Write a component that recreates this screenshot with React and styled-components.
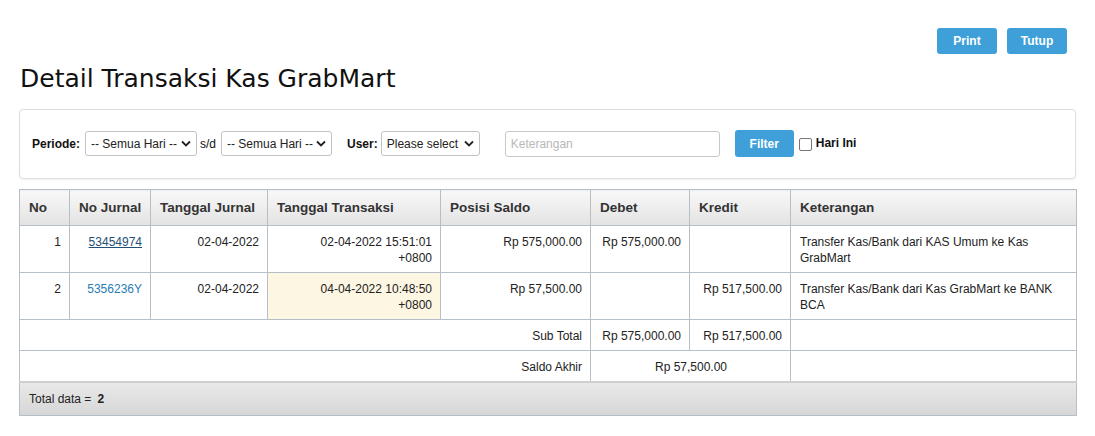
import React from 'react'
import styled, { createGlobalStyle } from 'styled-components'

const GlobalStyle = createGlobalStyle`
    body {
        margin: 0;
        background: #fff;
        font-family: "Liberation Sans", Arial, sans-serif;
        font-size: 12px;
        color: #222;
    }
`

const Page = styled.div`
    padding: 28px 19px 20px 19px;
`

const TopBar = styled.div`
    display: flex;
    justify-content: flex-end;
    gap: 10px;
    padding-right: 9px;
`

const Button = styled.button`
    width: ${props => props.w || 60}px;
    height: ${props => props.h || 26}px;
    margin-left: ${props => props.ml || 0}px;
    border: none;
    border-radius: 3px;
    background: #3e9fd9;
    color: #fff;
    font-family: "Liberation Sans", Arial, sans-serif;
    font-weight: bold;
    font-size: 12px;
    padding: 0;
    cursor: pointer;
`

const Title = styled.h1`
    margin: 10px 0 0 1px;
    font-family: "DejaVu Sans", Verdana, sans-serif;
    font-weight: normal;
    font-size: 25px;
    line-height: 30px;
    color: #111;
`

const FilterPanel = styled.div`
    margin-top: 15px;
    border: 1px solid #dedede;
    border-radius: 4px;
    box-shadow: 0 1px 2px rgba(0, 0, 0, 0.06);
    padding: 20px 12px 21px 12px;
    display: flex;
    align-items: center;
`

const Label = styled.span`
    font-weight: ${props => (props.bold ? 'bold' : 'normal')};
    color: #111;
    margin-right: ${props => props.mr || 0}px;
    margin-left: ${props => props.ml || 0}px;
`

const SelectWrap = styled.div`
    position: relative;
    width: ${props => props.w}px;
    height: 25px;
`

const Select = styled.select`
    appearance: none;
    width: 100%;
    height: 100%;
    border: 1px solid #c3c3c3;
    border-radius: 3px;
    background: #fff;
    font-family: "Liberation Sans", Arial, sans-serif;
    font-size: 12px;
    color: #222;
    padding: 0 0 0 5px;
`

const Chevron = styled.svg`
    position: absolute;
    right: 6px;
    top: 9px;
    pointer-events: none;
`

const TextInput = styled.input`
    width: 215px;
    height: 26px;
    box-sizing: border-box;
    border: 1px solid #c8c8c8;
    border-radius: 3px;
    padding: 0 5px;
    font-family: "Liberation Sans", Arial, sans-serif;
    font-size: 12px;
    margin-left: 25px;
    &::placeholder {
        color: #b8b8b8;
    }
`

const CheckBox = styled.input`
    appearance: none;
    width: 13px;
    height: 13px;
    border: 1px solid #767676;
    border-radius: 2px;
    margin: 3px 4px 0 5px;
    background: #fff;
`

const CheckLabel = styled.label`
    display: flex;
    align-items: center;
    font-weight: bold;
    color: #111;
    margin-top: -2px;
`

const Table = styled.table`
    margin-top: 10px;
    width: 100%;
    table-layout: fixed;
    border-collapse: collapse;
    border: 1px solid #b6bfc7;
`

const HeadCell = styled.th`
    height: 35px;
    padding: 0 9px;
    text-align: left;
    font-size: 13.5px;
    font-weight: bold;
    color: #333;
    border: 1px solid #b6bfc7;
    background: linear-gradient(#f8f8f8, #e3e3e3);
    white-space: nowrap;
`

const Cell = styled.td`
    padding: 8px 8px 6px 9px;
    line-height: 16px;
    vertical-align: top;
    text-align: ${props => props.align || 'right'};
    border: 1px solid #b6bfc7;
    background: ${props => (props.hl ? '#fdf6e3' : '#fff')};
    color: #222;
`

const JournalLink = styled.a`
    color: ${props => (props.visited ? '#1f4f78' : '#2a7bb4')};
    text-decoration: ${props => (props.visited ? 'underline' : 'none')};
`

const FooterCell = styled.td`
    height: 32px;
    padding: 0 9px;
    background: linear-gradient(#e9e9e9, #d6d6d6);
    border-top: 2px solid #cfcfcf;
    color: #222;
`

const Strong = styled.b`
    margin-left: 6px;
`

const ChevronIcon = () => (
    <Chevron width="10" height="7" viewBox="0 0 10 7">
        <path d="M1 1.5 L5 5.5 L9 1.5" fill="none" stroke="#222" strokeWidth="1.8" />
    </Chevron>
)

const COLS = [50, 81, 117, 173, 150, 99, 101, 286]
const HEADERS = ['No', 'No Jurnal', 'Tanggal Jurnal', 'Tanggal Transaksi', 'Posisi Saldo', 'Debet', 'Kredit', 'Keterangan']

const ROWS = [
    {
        no: 1,
        jurnal: '53454974',
        visited: true,
        tglJurnal: '02-04-2022',
        tglTrans: '02-04-2022 15:51:01',
        saldo: 'Rp 575,000.00',
        debet: 'Rp 575,000.00',
        kredit: '',
        ket: 'Transfer Kas/Bank dari KAS Umum ke Kas GrabMart'
    },
    {
        no: 2,
        jurnal: '5356236Y',
        tglJurnal: '02-04-2022',
        tglTrans: '04-04-2022 10:48:50',
        hl: true,
        saldo: 'Rp 57,500.00',
        debet: '',
        kredit: 'Rp 517,500.00',
        ket: 'Transfer Kas/Bank dari Kas GrabMart ke BANK BCA'
    }
]

export default function App() {
    return (
        <Page>
            <GlobalStyle />
            <TopBar>
                <Button>Print</Button>
                <Button>Tutup</Button>
            </TopBar>
            <Title>Detail Transaksi Kas GrabMart</Title>
            <FilterPanel>
                <Label bold mr={5}>Periode:</Label>
                <SelectWrap w={112}>
                    <Select defaultValue="all"><option value="all">-- Semua Hari --</option></Select>
                    <ChevronIcon />
                </SelectWrap>
                <Label ml={3} mr={5}>s/d</Label>
                <SelectWrap w={111}>
                    <Select defaultValue="all"><option value="all">-- Semua Hari --</option></Select>
                    <ChevronIcon />
                </SelectWrap>
                <Label bold ml={15} mr={3}>User:</Label>
                <SelectWrap w={99}>
                    <Select defaultValue=""><option value="">Please select</option></Select>
                    <ChevronIcon />
                </SelectWrap>
                <TextInput placeholder="Keterangan" />
                <Button w={59} h={27} ml={15}>Filter</Button>
                <CheckLabel>
                    <CheckBox type="checkbox" />
                    Hari Ini
                </CheckLabel>
            </FilterPanel>
            <Table>
                <colgroup>
                    {COLS.map((w, i) => <col key={i} style={{ width: w }} />)}
                </colgroup>
                <thead>
                    <tr>
                        {HEADERS.map(h => <HeadCell key={h}>{h}</HeadCell>)}
                    </tr>
                </thead>
                <tbody>
                    {ROWS.map(r => (
                        <tr key={r.no}>
                            <Cell>{r.no}</Cell>
                            <Cell><JournalLink href="#" visited={r.visited ? 1 : 0}>{r.jurnal}</JournalLink></Cell>
                            <Cell>{r.tglJurnal}</Cell>
                            <Cell hl={r.hl ? 1 : 0}>{r.tglTrans}<br />+0800</Cell>
                            <Cell>{r.saldo}</Cell>
                            <Cell>{r.debet}</Cell>
                            <Cell>{r.kredit}</Cell>
                            <Cell align="left">{r.ket}</Cell>
                        </tr>
                    ))}
                    <tr>
                        <Cell colSpan={5}>Sub Total</Cell>
                        <Cell>Rp 575,000.00</Cell>
                        <Cell>Rp 517,500.00</Cell>
                        <Cell />
                    </tr>
                    <tr>
                        <Cell colSpan={5}>Saldo Akhir</Cell>
                        <Cell colSpan={2} align="center">Rp 57,500.00</Cell>
                        <Cell />
                    </tr>
                </tbody>
                <tfoot>
                    <tr>
                        <FooterCell colSpan={8}>Total data =<Strong>2</Strong></FooterCell>
                    </tr>
                </tfoot>
            </Table>
        </Page>
    )
}
